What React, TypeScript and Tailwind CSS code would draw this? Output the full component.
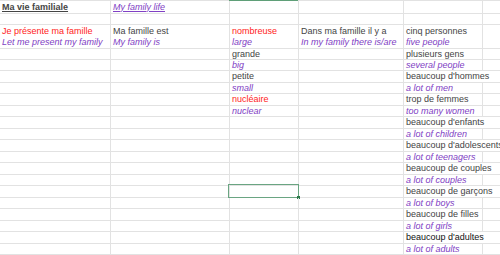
import React from "react";

type Cell = { t: string; k?: "g" | "r" | "p" | "b" | "h" | "hp" };
type Row = { h: number; cells: (Cell | null)[]; noBottom?: boolean; overflowE?: boolean; sel?: boolean };

const cls: Record<string, string> = {
  g: "text-[#444444]",
  r: "text-[#ff1a1a]",
  p: "text-[#8040c4] italic",
  b: "text-[#111111]",
  h: "text-[#444444] font-bold underline",
  hp: "text-[#8040c4] italic underline",
};

const rows: Row[] = [
  { h: 13, cells: [{ t: "Ma vie familiale ", k: "h" }, { t: "My family life", k: "hp" }, null, null, null, null] },
  { h: 11, cells: [null, null, null, null, null, null] },
  {
    h: 12,
    noBottom: true,
    cells: [
      { t: "Je présente ma famille", k: "r" },
      { t: "Ma famille est", k: "g" },
      { t: "nombreuse", k: "r" },
      { t: "Dans ma famille il y a", k: "g" },
      { t: "cinq personnes", k: "g" },
      null,
    ],
  },
  {
    h: 12,
    cells: [
      { t: "Let me present my family", k: "p" },
      { t: "My family is", k: "p" },
      { t: "large", k: "p" },
      { t: "In my family there is/are", k: "p" },
      { t: "five people", k: "p" },
      null,
    ],
  },
  { h: 11, cells: [null, null, { t: "grande", k: "g" }, null, { t: "plusieurs gens", k: "g" }, null] },
  { h: 11, cells: [null, null, { t: "big", k: "p" }, null, { t: "several people", k: "p" }, null] },
  { h: 12, overflowE: true, cells: [null, null, { t: "petite", k: "g" }, null, { t: "beaucoup d'hommes", k: "g" }, null] },
  { h: 11, cells: [null, null, { t: "small", k: "p" }, null, { t: "a lot of men", k: "p" }, null] },
  { h: 12, cells: [null, null, { t: "nucléaire", k: "r" }, null, { t: "trop de femmes", k: "g" }, null] },
  { h: 11, cells: [null, null, { t: "nuclear", k: "p" }, null, { t: "too many women", k: "p" }, null] },
  { h: 12, overflowE: true, cells: [null, null, null, null, { t: "beaucoup d'enfants", k: "g" }, null] },
  { h: 11, cells: [null, null, null, null, { t: "a lot of children", k: "p" }, null] },
  { h: 12, overflowE: true, cells: [null, null, null, null, { t: "beaucoup d'adolescents", k: "g" }, null] },
  { h: 11, cells: [null, null, null, null, { t: "a lot of teenagers", k: "p" }, null] },
  { h: 12, overflowE: true, cells: [null, null, null, null, { t: "beaucoup de couples", k: "g" }, null] },
  { h: 11, cells: [null, null, null, null, { t: "a lot of couples", k: "p" }, null] },
  { h: 12, overflowE: true, sel: true, cells: [null, null, null, null, { t: "beaucoup de garçons", k: "g" }, null] },
  { h: 11, cells: [null, null, null, null, { t: "a lot of boys", k: "p" }, null] },
  { h: 12, cells: [null, null, null, null, { t: "beaucoup de filles", k: "g" }, null] },
  { h: 11, cells: [null, null, null, null, { t: "a lot of girls", k: "p" }, null] },
  { h: 12, overflowE: true, cells: [null, null, null, null, { t: "beaucoup d'adultes", k: "b" }, null] },
  { h: 11, cells: [null, null, null, null, { t: "a lot of adults", k: "p" }, null] },
];

const widths = ["w-[111px]", "w-[119px]", "w-[69px]", "w-[105px]", "w-[79px]", "flex-1"];

export default function App() {
  return (
    <div
      className="w-[500px] h-[255px] overflow-hidden bg-white flex flex-col"
      style={{ fontFamily: '"Liberation Sans", Arial, sans-serif' }}
    >
      {rows.map((row, ri) => (
        <div
          key={ri}
          className={`flex shrink-0 ${ri === 0 ? "border-t border-[#e2e2e2]" : ""} ${
            row.noBottom ? "" : "border-b border-[#e2e2e2]"
          }`}
          style={{ height: ri === 0 ? row.h + 1 : row.h }}
        >
          {row.cells.map((c, ci) => {
            const hideRight = (ci === 4 && row.overflowE) || ci === 5;
            return (
              <div
                key={ci}
                className={`relative flex items-center pl-[2px] whitespace-nowrap text-[9px] leading-none ${widths[ci]} ${
                  hideRight ? "" : "border-r border-[#e2e2e2]"
                } ${ci === 5 ? "" : "shrink-0"}`}
              >
                {ri === 0 && ci === 2 && (
                  <div className="absolute left-[-1px] right-0 top-[-1px] h-px bg-[#5f9f78]" />
                )}
                {row.sel && ci === 2 && (
                  <div className="absolute left-[-2px] right-[-1px] top-[-2px] bottom-[-1px] border border-[#6aa582]">
                    <div className="absolute right-[-2px] bottom-[-2px] w-[3px] h-[3px] bg-[#2f7a4c]" />
                  </div>
                )}
                {c && <span className={cls[c.k || "g"]}>{c.t}</span>}
              </div>
            );
          })}
        </div>
      ))}
    </div>
  );
}
